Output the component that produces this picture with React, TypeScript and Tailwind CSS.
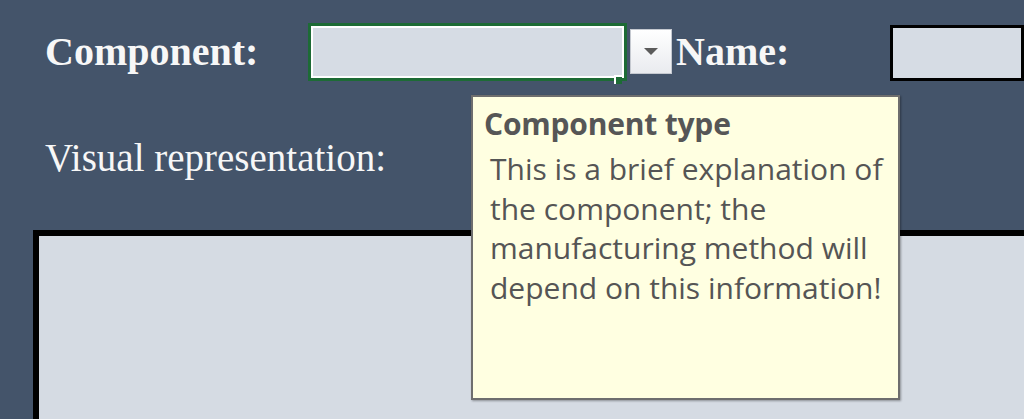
import React from "react";

const serif = "font-['Liberation_Serif','Times_New_Roman',serif]";
const sans = "font-['Open_Sans','Noto_Sans',sans-serif]";

function ComboBox() {
  return (
    <div className="flex items-center">
      {/* Excel-style selected cell */}
      <div className="relative h-[58px] w-[319px] border-[3px] border-[#1d6b35] bg-white p-[2px]">
        <div className="h-full w-full bg-[#d6dce4]" />
        {/* fill handle */}
        <div className="absolute -bottom-[6px] right-[2px] h-[9px] w-[8px] border-l-2 border-t-2 border-white bg-[#1d6b35]" />
      </div>
      <div className="ml-[3px] flex h-[45px] w-[42px] items-center justify-center border border-[#c5c9d0] bg-gradient-to-b from-white to-[#e9ebef]">
        <svg width="16" height="9" viewBox="0 0 16 9">
          <path d="M1 1 L15 1 L8 8 Z" fill="#5b5b5b" />
        </svg>
      </div>
    </div>
  );
}

export default function App() {
  return (
    <div className="relative h-[419px] w-[1024px] overflow-hidden bg-[#44546a]">
      {/* top row */}
      <div className="flex items-center pl-[45px] pt-[22px]">
        <span className={`${serif} w-[263px] text-[40px] font-bold leading-none text-[#f7f7f7]`}>
          Component:
        </span>
        <ComboBox />
        <span className={`${serif} ml-[4px] w-[214px] text-[40px] font-bold leading-none text-[#f7f7f7]`}>
          Name:
        </span>
        <div className="mt-[3px] h-[56px] flex-1 border-[3px] border-black bg-[#d6dce4]" />
      </div>

      <div className={`${serif} ml-[45px] mt-[57px] text-[39px] leading-none text-[#f7f7f7]`}>
        Visual representation:
      </div>

      {/* picture area */}
      <div className="ml-[33px] mt-[53px] h-[300px] w-[1000px] border-[6px] border-black bg-[#d5dbe3]" />

      {/* tooltip */}
      <div className="absolute left-[471px] top-[95px] h-[305px] w-[429px] border-2 border-[#6e6e6e] bg-[#ffffe1] shadow-[1px_1px_2px_rgba(0,0,0,0.35)]">
        <div className={`${sans} pl-[11px] pt-[9px] text-[30px] font-bold leading-[36px] tracking-[-0.2px] text-[#565656]`}>
          Component type
        </div>
        <div className={`${sans} whitespace-nowrap pl-[17px] pt-[7px] text-[30px] leading-[39.5px] text-[#555555]`}>
          This is a brief explanation of
          <br />
          the component; the
          <br />
          manufacturing method will
          <br />
          depend on this information!
        </div>
      </div>
    </div>
  );
}
